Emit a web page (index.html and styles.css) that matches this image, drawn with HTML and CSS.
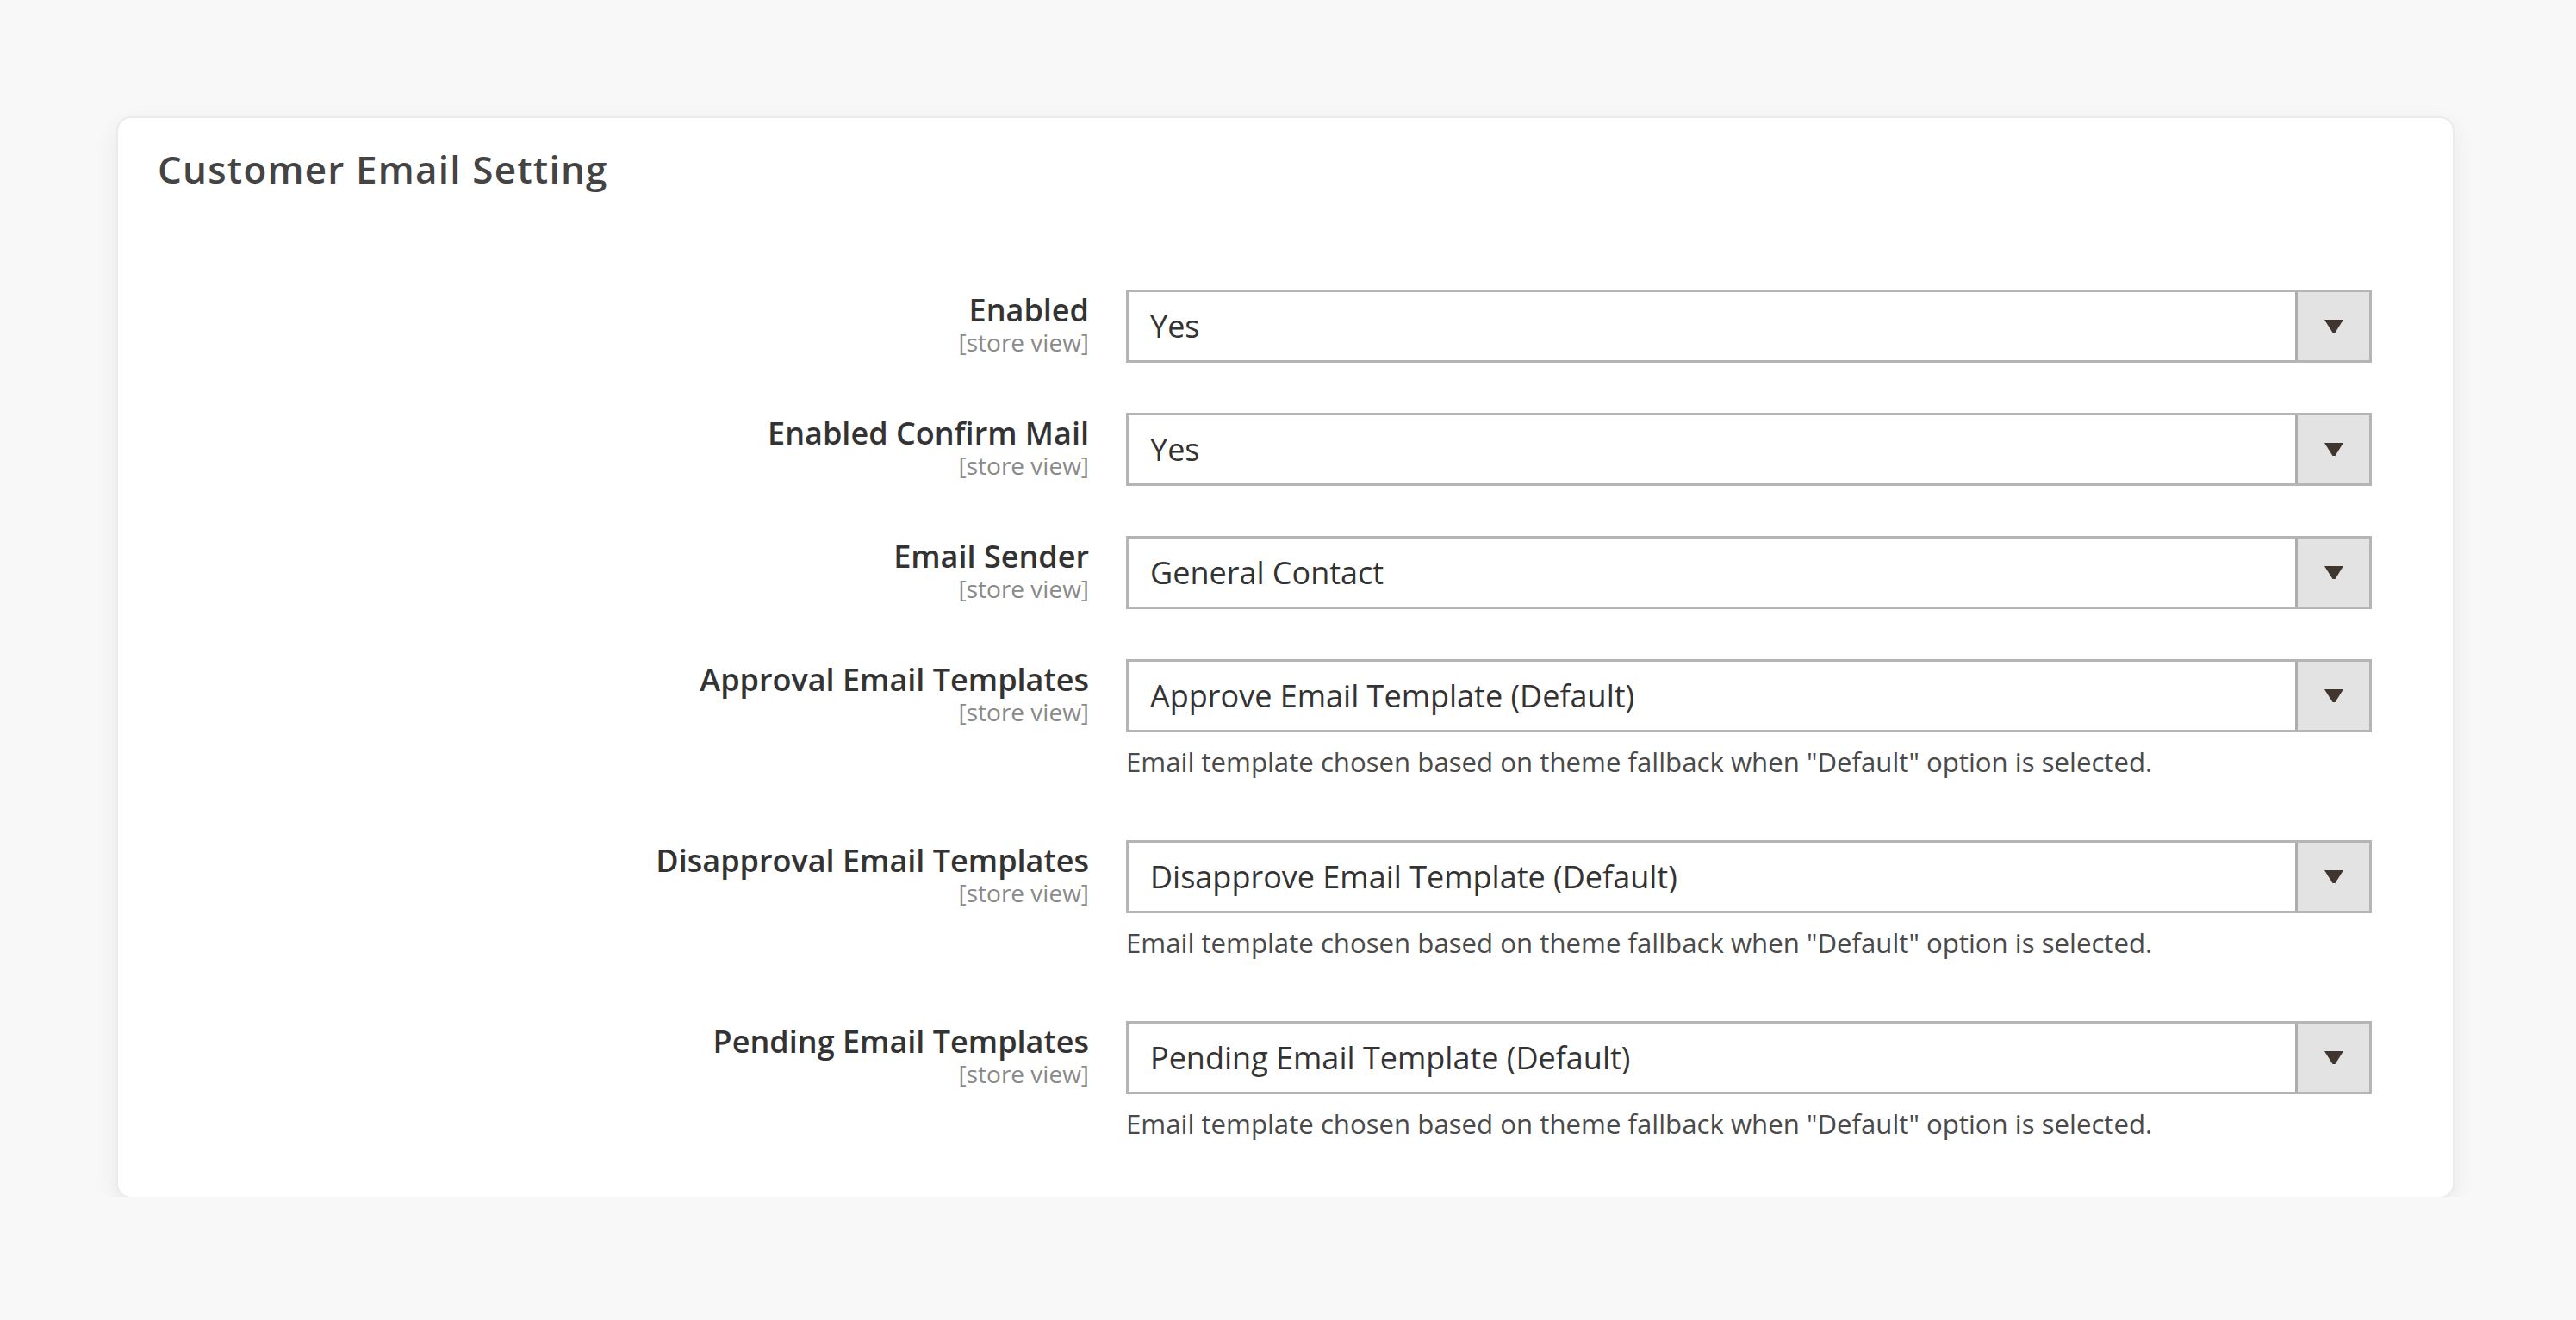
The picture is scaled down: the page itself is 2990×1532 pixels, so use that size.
FILE: index.html
```html
<!DOCTYPE html>
<html lang="en">
<head>
  <meta charset="UTF-8" />
  <meta name="viewport" content="width=device-width, initial-scale=1.0"/>
  <title>Customer Email Setting</title>
  <link rel="stylesheet" href="styles.css">
</head>
<body>

<div class="card">
  <h2 class="card-title">Customer Email Setting</h2>

  <div class="form">
    <div class="field">
      <label class="field-label">Enabled<span class="scope">[store view]</span></label>
      <div class="field-control">
        <div class="select"><span class="select-value">Yes</span><span class="select-arrow"><svg width="22" height="15" viewBox="0 0 22 15"><path d="M0 0h22L12.5 15h-3z" /></svg></span></div>
      </div>
    </div>

    <div class="field">
      <label class="field-label">Enabled Confirm Mail<span class="scope">[store view]</span></label>
      <div class="field-control">
        <div class="select"><span class="select-value">Yes</span><span class="select-arrow"><svg width="22" height="15" viewBox="0 0 22 15"><path d="M0 0h22L12.5 15h-3z" /></svg></span></div>
      </div>
    </div>

    <div class="field">
      <label class="field-label">Email Sender<span class="scope">[store view]</span></label>
      <div class="field-control">
        <div class="select"><span class="select-value">General Contact</span><span class="select-arrow"><svg width="22" height="15" viewBox="0 0 22 15"><path d="M0 0h22L12.5 15h-3z" /></svg></span></div>
      </div>
    </div>

    <div class="field">
      <label class="field-label">Approval Email Templates<span class="scope">[store view]</span></label>
      <div class="field-control">
        <div class="select"><span class="select-value">Approve Email Template (Default)</span><span class="select-arrow"><svg width="22" height="15" viewBox="0 0 22 15"><path d="M0 0h22L12.5 15h-3z" /></svg></span></div>
        <p class="note">Email template chosen based on theme fallback when "Default" option is selected.</p>
      </div>
    </div>

    <div class="field">
      <label class="field-label">Disapproval Email Templates<span class="scope">[store view]</span></label>
      <div class="field-control">
        <div class="select"><span class="select-value">Disapprove Email Template (Default)</span><span class="select-arrow"><svg width="22" height="15" viewBox="0 0 22 15"><path d="M0 0h22L12.5 15h-3z" /></svg></span></div>
        <p class="note">Email template chosen based on theme fallback when "Default" option is selected.</p>
      </div>
    </div>

    <div class="field">
      <label class="field-label">Pending Email Templates<span class="scope">[store view]</span></label>
      <div class="field-control">
        <div class="select"><span class="select-value">Pending Email Template (Default)</span><span class="select-arrow"><svg width="22" height="15" viewBox="0 0 22 15"><path d="M0 0h22L12.5 15h-3z" /></svg></span></div>
        <p class="note">Email template chosen based on theme fallback when "Default" option is selected.</p>
      </div>
    </div>
  </div>
</div>

</body>
</html>
```

FILE: styles.css
```css
* { margin: 0; padding: 0; box-sizing: border-box; }

body {
  font-family: "Open Sans", "Liberation Sans", sans-serif;
  background: #f8f8f8;
  color: #303030;
}

.card {
  width: 2710px;
  margin: 137px 0 0 137px;
  padding: 29px 94px 52px 46px;
  background: #fff;
  border-radius: 15px;
  box-shadow: 0 0 0 2px #ebebeb, 0 10px 30px rgba(0, 0, 0, 0.08);
}

.card-title {
  font-size: 44px;
  font-weight: 600;
  letter-spacing: 1.2px;
  line-height: 60px;
  color: #444;
}

.form {
  margin-top: 110px;
  display: flex;
  flex-direction: column;
  gap: 58px;
}

.field {
  display: grid;
  grid-template-columns: 1081px 1fr;
  column-gap: 43px;
  align-items: start;
}

.field-label {
  display: flex;
  flex-direction: column;
  align-items: flex-end;
  padding-top: 2px;
  font-size: 36px;
  font-weight: 600;
  line-height: 1.2;
  color: #333;
}

.scope {
  font-size: 28px;
  font-weight: 400;
  line-height: 1.2;
  color: #8a8a8a;
}

.select {
  display: flex;
  height: 85px;
  border: 3px solid #b5b5b5;
  background: #fff;
}

.select-value {
  flex: 1;
  display: flex;
  align-items: center;
  padding-left: 25px;
  font-size: 36px;
  color: #333;
}

.select-arrow {
  width: 86px;
  display: flex;
  align-items: center;
  justify-content: center;
  background: #e3e3e3;
  border-left: 3px solid #adadad;
}

.select-arrow svg { fill: #41362f; }

.note {
  margin-top: 11px;
  padding-bottom: 10px;
  font-size: 31.2px;
  line-height: 46px;
  color: #4a4a4a;
}
```
